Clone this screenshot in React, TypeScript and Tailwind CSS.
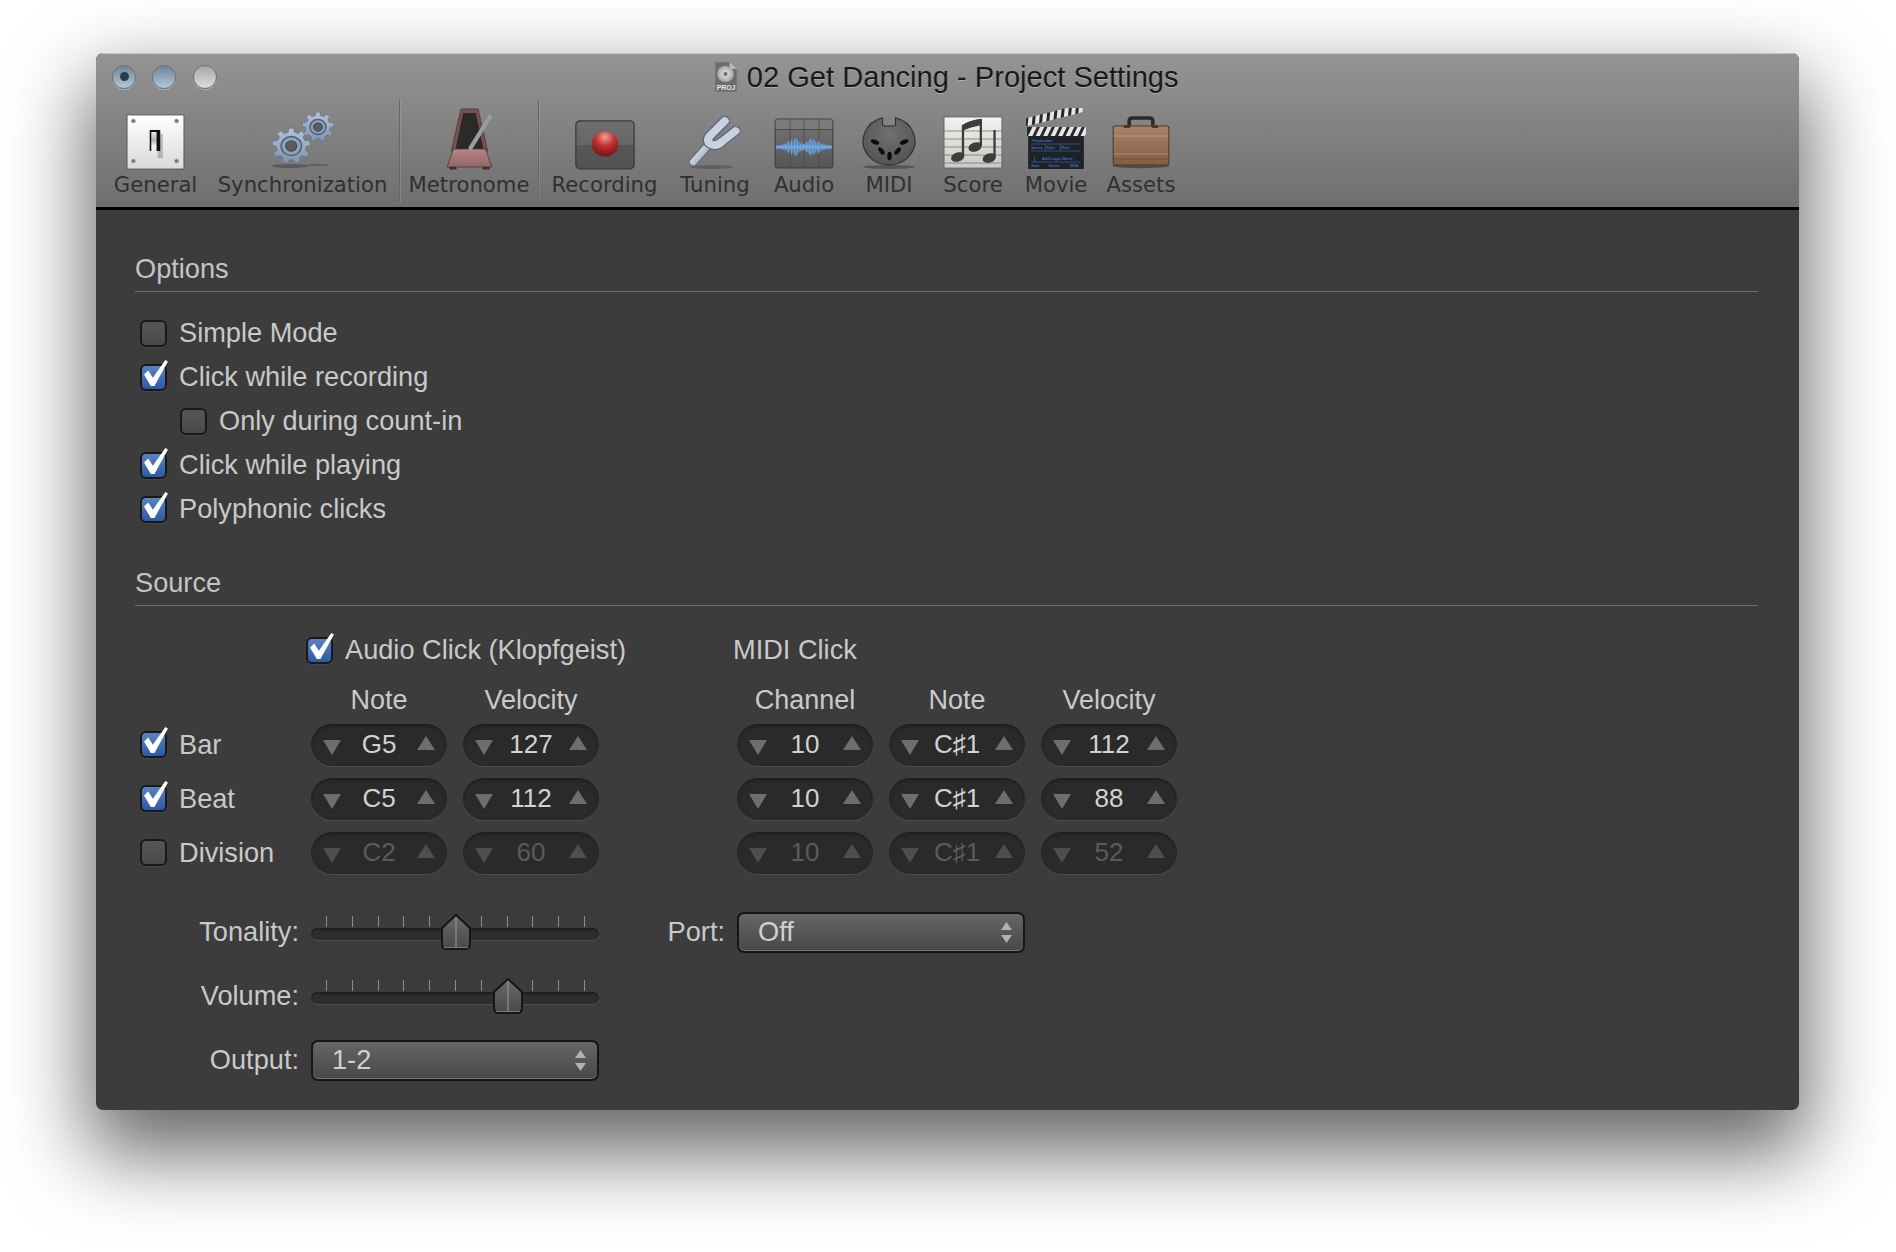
import React from "react";

const sans = "[font-family:'Liberation_Sans',Arial,sans-serif]";

function gearPath(cx: number, cy: number, r: number, teeth: number, depth: number) {
  const pts: string[] = [];
  const step = (Math.PI * 2) / teeth;
  for (let i = 0; i < teeth; i++) {
    const a = i * step - Math.PI / 2;
    const add = (ang: number, rad: number) =>
      pts.push(`${(cx + Math.cos(ang) * rad).toFixed(2)},${(cy + Math.sin(ang) * rad).toFixed(2)}`);
    add(a - step * 0.3, r - depth);
    add(a - step * 0.18, r);
    add(a + step * 0.18, r);
    add(a + step * 0.3, r - depth);
  }
  return pts.join(" ");
}

function GeneralIcon() {
  return (
    <svg width="59" height="56" viewBox="0 0 56 56" preserveAspectRatio="none">
      <defs>
        <linearGradient id="gp" x1="0" y1="0" x2="0" y2="1">
          <stop offset="0" stopColor="#ffffff" />
          <stop offset="1" stopColor="#d9d9d9" />
        </linearGradient>
        <linearGradient id="gs" x1="0" y1="0" x2="0" y2="1">
          <stop offset="0" stopColor="#ececec" />
          <stop offset="0.35" stopColor="#b0b0b0" />
          <stop offset="0.6" stopColor="#f2f2f2" />
          <stop offset="1" stopColor="#e2e2e2" />
        </linearGradient>
      </defs>
      <rect x="1" y="1" width="54" height="54" fill="url(#gp)" stroke="#4f4f4f" strokeWidth="0.8" />
      {[[7, 7], [48, 7], [7, 47], [48, 47]].map(([x, y], i) => (
        <circle key={i} cx={x} cy={y} r="2" fill="#777" stroke="#aaa" strokeWidth="0.6" />
      ))}
      <rect x="30" y="20" width="5" height="24" fill="#000" opacity="0.2" />
      <rect x="22.5" y="16" width="10" height="21" fill="#0f0f0f" />
      <rect x="24" y="18" width="5" height="23" fill="url(#gs)" />
    </svg>
  );
}

function GearsIcon() {
  const gear = (cx: number, cy: number, r: number, t: number, inner: number) => (
    <>
      <polygon points={gearPath(cx, cy, r, t, r * 0.22)} fill="url(#gg)" stroke="#5f6f86" strokeWidth="0.6" />
      <circle cx={cx} cy={cy} r={inner} fill="#8fa3be" stroke="#4e5d73" strokeWidth="1.4" />
      <circle cx={cx} cy={cy} r={inner * 0.55} fill="#5d5d5d" stroke="#3e4654" strokeWidth="1" />
    </>
  );
  return (
    <svg width="64" height="58" viewBox="0 0 60 58" preserveAspectRatio="none">
      <defs>
        <linearGradient id="gg" x1="0" y1="0" x2="0" y2="1">
          <stop offset="0" stopColor="#b4c3d8" />
          <stop offset="1" stopColor="#7f92ad" />
        </linearGradient>
      </defs>
      <ellipse cx="18" cy="54" rx="17" ry="2" fill="#000" opacity="0.25" />
      <ellipse cx="44" cy="53" rx="11" ry="1.3" fill="#000" opacity="0.18" />
      {gear(19, 34, 18, 9, 9.5)}
      {gear(44, 15, 15, 9, 7.5)}
    </svg>
  );
}

function MetronomeIcon() {
  return (
    <svg width="47" height="62" viewBox="0 0 44 62" preserveAspectRatio="none">
      <defs>
        <linearGradient id="mb" x1="0" y1="0" x2="0" y2="1">
          <stop offset="0" stopColor="#b58686" />
          <stop offset="1" stopColor="#966464" />
        </linearGradient>
      </defs>
      <polygon points="14,1 30,1 39,43 5,43" fill="#7a4f50" stroke="#4a3a3a" strokeWidth="0.8" />
      <polygon points="16,5 28,5 35,41 9,41" fill="#2a2a2a" />
      <polygon points="7,41 37,41 43,59 1,59" fill="url(#mb)" stroke="#4b3a3a" strokeWidth="0.8" />
      <rect x="3" y="59" width="7" height="2.5" rx="1" fill="#3a2f2f" />
      <rect x="34" y="59" width="7" height="2.5" rx="1" fill="#3a2f2f" />
      <line x1="23" y1="40" x2="41" y2="9" stroke="#9a9ca2" strokeWidth="4" strokeLinecap="round" />
    </svg>
  );
}

function RecordIcon() {
  return (
    <svg width="60" height="50" viewBox="0 0 56 50" preserveAspectRatio="none">
      <defs>
        <linearGradient id="rb" x1="0" y1="0" x2="0" y2="1">
          <stop offset="0" stopColor="#6e6e6e" />
          <stop offset="0.5" stopColor="#666" />
          <stop offset="0.5" stopColor="#575757" />
          <stop offset="1" stopColor="#525252" />
        </linearGradient>
        <radialGradient id="rr" cx="0.5" cy="0.22" r="0.8">
          <stop offset="0" stopColor="#eda09a" />
          <stop offset="0.45" stopColor="#c2302c" />
          <stop offset="1" stopColor="#6f1412" />
        </radialGradient>
      </defs>
      <rect x="0.8" y="0.8" width="54.4" height="48" rx="4" fill="url(#rb)" stroke="#3a3a3a" strokeWidth="1.2" />
      <circle cx="28" cy="24" r="12.5" fill="url(#rr)" />
    </svg>
  );
}

function ForkIcon() {
  return (
    <svg width="54" height="54" viewBox="0 0 50 54" preserveAspectRatio="none">
      <defs>
        <linearGradient id="ff" x1="0" y1="0" x2="1" y2="1">
          <stop offset="0" stopColor="#f0f3f8" />
          <stop offset="1" stopColor="#8e9bb0" />
        </linearGradient>
      </defs>
      <ellipse cx="22" cy="51" rx="20" ry="2" fill="#000" opacity="0.2" />
      <path d="M5 46 L19 29" stroke="#5e6a7c" strokeWidth="8.5" strokeLinecap="round" fill="none" />
      <path d="M5 46 L19 29" stroke="url(#ff)" strokeWidth="6.5" strokeLinecap="round" fill="none" />
      <path d="M34 5 L21 19 Q16 25 21 28 Q26 31 31 26 L44 15" stroke="#5e6a7c" strokeWidth="10" strokeLinecap="round" strokeLinejoin="round" fill="none" />
      <path d="M34 5 L21 19 Q16 25 21 28 Q26 31 31 26 L44 15" stroke="#c8d2e0" strokeWidth="7.5" strokeLinecap="round" strokeLinejoin="round" fill="none" />
    </svg>
  );
}

function AudioIcon() {
  const amps = [2,2,3,3,4,6,5,8,10,7,12,9,13,15,11,8,6,7,5,6,9,8,12,14,10,13,9,7,11,8,5,6,4,3,3,2,2];
  return (
    <svg width="60" height="52" viewBox="0 0 56 52" preserveAspectRatio="none">
      <defs>
        <linearGradient id="ab" x1="0" y1="0" x2="0" y2="1">
          <stop offset="0" stopColor="#757575" />
          <stop offset="1" stopColor="#565656" />
        </linearGradient>
      </defs>
      <rect x="1" y="1" width="54" height="49" rx="3" fill="url(#ab)" stroke="#3d3d3d" strokeWidth="1" />
      <rect x="1.5" y="1.5" width="53" height="10" rx="2" fill="#8a8a8a" opacity="0.45" />
      <line x1="1" y1="11.5" x2="55" y2="11.5" stroke="#4a4a4a" />
      {[15, 28, 42].map((x) => (
        <line key={x} x1={x} y1="1" x2={x} y2="50" stroke="#4a4a4a" strokeWidth="0.7" />
      ))}
      {amps.map((a, i) => (
        <line key={i} x1={2.5 + i * 1.39} y1={29 - a * 0.6} x2={2.5 + i * 1.39} y2={29 + a * 0.6} stroke="#69a6e6" strokeWidth="1" />
      ))}
      <line x1="2" y1="29" x2="54" y2="29" stroke="#69a6e6" strokeWidth="3" />
    </svg>
  );
}

function MidiIcon() {
  const pins = [[12, 26, 25], [18, 35, 55], [25.5, 40, 90], [33, 35, 125], [39, 26, 155]];
  return (
    <svg width="54" height="54" viewBox="0 0 50 54" preserveAspectRatio="none">
      <defs>
        <radialGradient id="mc" cx="0.5" cy="0.35" r="0.7">
          <stop offset="0" stopColor="#707070" />
          <stop offset="1" stopColor="#515151" />
        </radialGradient>
      </defs>
      <ellipse cx="25" cy="51" rx="24" ry="2" fill="#000" opacity="0.3" />
      <path d="M19 1.8 A24 24 0 1 0 31 1.8 L31 8 Q31 10 29 10 L21 10 Q19 10 19 8 Z" fill="url(#mc)" stroke="#2c2c2c" strokeWidth="1" />
      {pins.map(([x, y, r], i) => (
        <g key={i} transform={`rotate(${r} ${x} ${y})`}>
          <ellipse cx={x} cy={y} rx="4.2" ry="2.1" fill="#0c0c0c" />
        </g>
      ))}
    </svg>
  );
}

function ScoreIcon() {
  return (
    <svg width="61" height="54" viewBox="0 0 58 54" preserveAspectRatio="none">
      <defs>
        <linearGradient id="sp" x1="0" y1="0" x2="0" y2="1">
          <stop offset="0" stopColor="#f3f3ef" />
          <stop offset="1" stopColor="#c9c9c4" />
        </linearGradient>
      </defs>
      <rect x="1" y="1" width="55" height="51" fill="url(#sp)" stroke="#555" strokeWidth="0.7" />
      {[15, 23, 31, 39, 47].map((y) => (
        <line key={y} x1="1" y1={y} x2="56" y2={y} stroke="#777" strokeWidth="0.8" />
      ))}
      <ellipse cx="14" cy="41" rx="6.5" ry="4.6" transform="rotate(-20 14 41)" fill="#3c3c3c" />
      <ellipse cx="30.5" cy="31" rx="6.5" ry="4.6" transform="rotate(-20 30.5 31)" fill="#3c3c3c" />
      <ellipse cx="44" cy="42" rx="6.5" ry="4.6" transform="rotate(-20 44 42)" fill="#3c3c3c" />
      <path d="M19 40 L19 10 Q26 5 36 4 L36 30" fill="none" stroke="#3c3c3c" strokeWidth="2.2" />
      <path d="M18 10 Q26 4 37 3 L37 9 Q26 11 18 15 Z" fill="#3c3c3c" />
      <line x1="49" y1="41" x2="49" y2="14" stroke="#3c3c3c" strokeWidth="2.2" />
    </svg>
  );
}

function MovieIcon() {
  const stripes = [0, 1, 2, 3, 4, 5, 6, 7];
  return (
    <svg width="60" height="62" viewBox="0 0 56 62" preserveAspectRatio="none">
      <rect x="2" y="26" width="52" height="35" rx="1" fill="#1e2126" />
      <g transform="rotate(-15 2 20)">
        <rect x="1" y="10" width="54" height="8" fill="#26282c" />
        {stripes.map((i) => (
          <polygon key={i} points={`${5 + i * 7},10 ${9 + i * 7},10 ${6 + i * 7},18 ${2 + i * 7},18`} fill="#e6e6e6" />
        ))}
      </g>
      <rect x="1" y="19" width="54" height="9" fill="#26282c" />
      {stripes.map((i) => (
        <polygon key={i} points={`${6 + i * 7},19 ${10 + i * 7},19 ${6 + i * 7},28 ${2 + i * 7},28`} fill="#e6e6e6" />
      ))}
      <g fill="#3d6fb0" className={sans} fontSize="3.6" fontWeight="700">
        <text x="6" y="34">Production</text>
        <text x="5" y="41">Scene</text>
        <text x="19" y="41">Take</text>
        <text x="33" y="41">Reel</text>
        <text x="15" y="52">Add Logic Movie</text>
        <text x="5" y="59">Date</text>
        <text x="21" y="59">Scene</text>
        <text x="41" y="59">2024</text>
      </g>
      <g stroke="#3d6fb0" strokeWidth="0.6">
        <line x1="5" y1="36" x2="51" y2="36" />
        <line x1="5" y1="43" x2="51" y2="43" />
        <line x1="5" y1="54" x2="51" y2="54" />
        <line x1="18" y1="36" x2="18" y2="43" />
        <line x1="32" y1="36" x2="32" y2="43" />
        <line x1="8" y1="48" x2="8" y2="54" />
      </g>
    </svg>
  );
}

function AssetsIcon() {
  return (
    <svg width="60" height="54" viewBox="0 0 56 54" preserveAspectRatio="none">
      <defs>
        <linearGradient id="bc" x1="0" y1="0" x2="0" y2="1">
          <stop offset="0" stopColor="#a9846b" />
          <stop offset="1" stopColor="#845c42" />
        </linearGradient>
      </defs>
      <ellipse cx="28" cy="50" rx="27" ry="2.2" fill="#000" opacity="0.35" />
      <path d="M17 11 L17 5 Q17 2 20 2 L36 2 Q39 2 39 5 L39 11" fill="none" stroke="#2a2a2a" strokeWidth="3.4" />
      <rect x="2" y="10" width="52" height="39" rx="2" fill="url(#bc)" stroke="#4e3a2c" strokeWidth="1" />
      <line x1="2.5" y1="20" x2="53.5" y2="20" stroke="#c8a590" strokeWidth="1" opacity="0.7" />
      <line x1="2.5" y1="38" x2="53.5" y2="38" stroke="#c8a590" strokeWidth="1" opacity="0.6" />
      <line x1="2.5" y1="43" x2="53.5" y2="43" stroke="#6f4c35" strokeWidth="1" opacity="0.6" />
      <rect x="12" y="9" width="6" height="3" fill="#4a3a2e" />
      <rect x="38" y="9" width="6" height="3" fill="#4a3a2e" />
    </svg>
  );
}

function DocIcon() {
  return (
    <svg width="24" height="32" viewBox="0 0 23 32" preserveAspectRatio="none">
      <defs>
        <radialGradient id="dd" cx="0.5" cy="0.5" r="0.6">
          <stop offset="0" stopColor="#e6e6e6" />
          <stop offset="1" stopColor="#999" />
        </radialGradient>
      </defs>
      <path d="M1 1 L15 1 L22 8 L22 31 L1 31 Z" fill="#6d6d6d" stroke="#8a8a8a" strokeWidth="0.7" />
      <path d="M15 1 L15 8 L22 8 Z" fill="#b9b9b9" />
      <circle cx="11" cy="13" r="8" fill="url(#dd)" />
      <circle cx="11" cy="13" r="2" fill="#6d6d6d" />
      <text x="11.5" y="29" textAnchor="middle" fontSize="6.6" fontWeight="700" fill="#e8e8e8" className={sans}>
        PROJ
      </text>
    </svg>
  );
}

function Light({ kind }: { kind: "close" | "min" | "max" }) {
  const cls =
    kind === "max"
      ? "from-[#a6a6a6] to-[#dedede]"
      : "from-[#6c8599] to-[#b5c8d6]";
  return (
    <div className={`flex h-[24px] w-[24px] items-center justify-center rounded-full border border-[#707070] bg-linear-to-b shadow-[0_1px_0_rgba(255,255,255,0.3)] ${cls}`}>
      {kind === "close" && <div className="h-[9px] w-[9px] rounded-full bg-[#2f3b47]" />}
    </div>
  );
}

const tools: { label: string; w: string; icon: React.ReactNode }[] = [
  { label: "General", w: "w-[101px]", icon: <GeneralIcon /> },
  { label: "Synchronization", w: "w-[193px]", icon: <GearsIcon /> },
  { label: "|", w: "", icon: null },
  { label: "Metronome", w: "w-[138px]", icon: <MetronomeIcon /> },
  { label: "|", w: "", icon: null },
  { label: "Recording", w: "w-[131px]", icon: <RecordIcon /> },
  { label: "Tuning", w: "w-[90px]", icon: <ForkIcon /> },
  { label: "Audio", w: "w-[88px]", icon: <AudioIcon /> },
  { label: "MIDI", w: "w-[82px]", icon: <MidiIcon /> },
  { label: "Score", w: "w-[86px]", icon: <ScoreIcon /> },
  { label: "Movie", w: "w-[80px]", icon: <MovieIcon /> },
  { label: "Assets", w: "w-[90px]", icon: <AssetsIcon /> },
];

function Toolbar() {
  return (
    <div className="flex h-[107px] items-stretch pl-[9px]">
      {tools.map((t, i) =>
        t.label === "|" ? (
          <div key={i} className="h-[102px] w-px bg-[#666] shadow-[1px_0_0_rgba(255,255,255,0.12)]" />
        ) : (
          <div key={t.label} className={`flex flex-col items-center justify-end ${t.w}`}>
            <div className="flex items-end justify-center">{t.icon}</div>
            <div className="mb-[8px] mt-px h-[28px] whitespace-nowrap text-[21.2px] leading-[28px] text-[#303030] [font-family:'DejaVu_Sans',sans-serif]">
              {t.label}
            </div>
          </div>
        )
      )}
    </div>
  );
}

function Checkbox({ checked }: { checked?: boolean }) {
  return (
    <div
      className={`relative h-[27px] w-[27px] shrink-0 rounded-[6px] border-2 border-[#191919] bg-linear-to-b shadow-[0_1px_0_rgba(255,255,255,0.06)] ${
        checked ? "from-[#5a83bf] to-[#2c5aa2]" : "from-[#565656] to-[#4a4a4a]"
      }`}
    >
      {checked && (
        <svg width="24" height="27" viewBox="0 0 23 26" className="absolute -top-[6px] left-[2px]">
          <polygon points="0,14 4,10 8.5,17 20.5,0 23,1.5 10,25 6.5,25" fill="#ffffff" />
        </svg>
      )}
    </div>
  );
}

function CheckRow({ label, checked, indent }: { label: string; checked?: boolean; indent?: boolean }) {
  return (
    <div className={`flex h-[44px] items-center gap-[12px] ${indent ? "pl-[45px]" : "pl-[5px]"}`}>
      <Checkbox checked={checked} />
      <span className="text-[27.2px] text-[#c9c9c9]">{label}</span>
    </div>
  );
}

function Stepper({ value, off }: { value: string; off?: boolean }) {
  const tri = off ? "#4e4e4e" : "#6e6e6e";
  return (
    <div className="flex h-[42px] w-[136px] shrink-0 items-center justify-between rounded-full bg-[#2a2a2a] px-[12px] shadow-[inset_0_2px_3px_rgba(0,0,0,0.3),0_1px_0_rgba(255,255,255,0.09)]">
      <svg width="18" height="15" viewBox="0 0 18 15" className="mt-[4px]">
        <polygon points="0,0 18,0 9,15" fill={tri} />
      </svg>
      <span className={`-mt-[1px] text-[26px] ${off ? "text-[#5b5b5b]" : "text-[#d2d2d2]"}`}>{value}</span>
      <svg width="18" height="14" viewBox="0 0 18 14" className="-mt-[4px]">
        <polygon points="9,0 18,14 0,14" fill={tri} />
      </svg>
    </div>
  );
}

function Slider({ pos }: { pos: number }) {
  return (
    <div className="relative h-[42px] w-[288px]">
      <div className="flex h-[11px] justify-between pl-[15px] pr-[14px]">
        {Array.from({ length: 11 }).map((_, i) => (
          <div key={i} className="h-[11px] w-px bg-[#8f8f8f]" />
        ))}
      </div>
      <div className="mt-[1px] h-[12px] rounded-full bg-[#2d2d2d] shadow-[inset_0_2px_2px_rgba(0,0,0,0.35),0_1px_0_rgba(255,255,255,0.1)]" />
      <svg width="32" height="38" viewBox="0 0 32 38" className="absolute -top-[3px]" style={{ left: pos }}>
        <defs>
          <linearGradient id="th" x1="0" y1="0" x2="0" y2="1">
            <stop offset="0" stopColor="#6b6b6b" />
            <stop offset="1" stopColor="#484848" />
          </linearGradient>
        </defs>
        <path d="M16 2 L30 15 L30 31 Q30 36 25 36 L7 36 Q2 36 2 31 L2 15 Z" fill="url(#th)" stroke="#151515" strokeWidth="2" strokeLinejoin="round" />
        <line x1="16" y1="4" x2="16" y2="34" stroke="#9a9a9a" strokeWidth="1" />
        <path d="M4 34.5 L28 34.5" stroke="#7a7a7a" strokeWidth="1" />
      </svg>
    </div>
  );
}

function Select({ value, w }: { value: string; w: string }) {
  return (
    <div
      className={`flex h-[41px] items-center justify-between rounded-[7px] border-2 border-[#161616] bg-linear-to-b from-[#666666] to-[#484848] pl-[19px] pr-[11px] shadow-[inset_0_-1px_0_rgba(255,255,255,0.25)] ${w}`}
    >
      <span className="text-[27.2px] text-[#d0d0d0]">{value}</span>
      <svg width="11" height="21" viewBox="0 0 11 21">
        <polygon points="5.5,0 11,8 0,8" fill="#b2b2b2" />
        <polygon points="0,13 11,13 5.5,21" fill="#b2b2b2" />
      </svg>
    </div>
  );
}

function Heading({ label }: { label: string }) {
  return (
    <div className="flex h-[38px] items-start border-b border-[#6e6e6e] text-[27.2px] leading-[30px] text-[#c4c4c4]">
      {label}
    </div>
  );
}

function ColHead({ label }: { label: string }) {
  return <div className="h-[30px] w-[136px] shrink-0 text-center text-[27px] leading-[30px] text-[#cacaca]">{label}</div>;
}

export default function App() {
  return (
    <div className={`h-[1252px] w-[1896px] overflow-hidden bg-white pl-[96px] pt-[53px] ${sans}`}>
      <div className="h-[1057px] w-[1703px] overflow-hidden rounded-[7px] bg-[#3c3c3c] shadow-[0_36px_80px_8px_rgba(0,0,0,0.6)]">
        <div className="border-b-[3px] border-black bg-linear-to-b from-[#959595] to-[#6f6f6f] shadow-[inset_0_1px_0_#c4c4c4]">
          <div className="flex h-[47px] items-center pl-[16px]">
            <div className="flex gap-[16.4px]">
              <Light kind="close" />
              <Light kind="min" />
              <Light kind="max" />
            </div>
            <div className="ml-[497px] flex items-center gap-[9px]">
              <DocIcon />
              <span className="whitespace-nowrap text-[29.1px] leading-[32px] text-[#191919] [text-shadow:0_1px_0_rgba(255,255,255,0.3)]">
                02 Get Dancing - Project Settings
              </span>
            </div>
          </div>
          <Toolbar />
        </div>

        <div className="pl-[39px] pr-[41px] pt-[44px]">
          <Heading label="Options" />
          <div className="mt-[19px]">
            <CheckRow label="Simple Mode" />
            <CheckRow label="Click while recording" checked />
            <CheckRow label="Only during count-in" indent />
            <CheckRow label="Click while playing" checked />
            <CheckRow label="Polyphonic clicks" checked />
          </div>

          <div className="mt-[37px]">
            <Heading label="Source" />
          </div>

          <div className="mt-[22px] flex">
            <div className="w-[525px] shrink-0">
              <div className="flex h-[44px] items-center gap-[12px] pl-[171px] pt-[1px]">
                <Checkbox checked />
                <span className="whitespace-nowrap text-[27.2px] text-[#c9c9c9]">Audio Click (Klopfgeist)</span>
              </div>
              <div className="mt-[13px] flex gap-[16px] pl-[176px]">
                <ColHead label="Note" />
                <ColHead label="Velocity" />
              </div>
              <div className="mt-[9px] flex flex-col gap-[12px]">
                {[
                  { l: "Bar", c: true, a: "G5", b: "127" },
                  { l: "Beat", c: true, a: "C5", b: "112" },
                  { l: "Division", c: false, a: "C2", b: "60" },
                ].map((r) => (
                  <div key={r.l} className="flex h-[42px] items-center">
                    <div className="flex w-[176px] items-center gap-[12px] pl-[5px]">
                      <Checkbox checked={r.c} />
                      <span className="text-[27.2px] text-[#c9c9c9]">{r.l}</span>
                    </div>
                    <div className="flex gap-[16px]">
                      <Stepper value={r.a} off={!r.c} />
                      <Stepper value={r.b} off={!r.c} />
                    </div>
                  </div>
                ))}
              </div>
              <div className="mt-[42px] flex flex-col gap-[22px]">
                <div className="flex h-[42px] items-start gap-[12px]">
                  <span className="w-[164px] text-right text-[27.2px] leading-[32px] text-[#c9c9c9]">Tonality:</span>
                  <Slider pos={129} />
                </div>
                <div className="flex h-[37px] items-start gap-[12px]">
                  <span className="w-[164px] text-right text-[27.2px] leading-[32px] text-[#c9c9c9]">Volume:</span>
                  <Slider pos={181} />
                </div>
                <div className="flex h-[42px] items-center gap-[12px]">
                  <span className="w-[164px] text-right text-[27.2px] text-[#c9c9c9]">Output:</span>
                  <Select value="1-2" w="w-[288px]" />
                </div>
              </div>
            </div>

            <div>
              <div className="flex h-[44px] items-center pl-[73px] pt-[1px]">
                <span className="text-[27.2px] text-[#c9c9c9]">MIDI Click</span>
              </div>
              <div className="mt-[13px] flex gap-[16px] pl-[77px]">
                <ColHead label="Channel" />
                <ColHead label="Note" />
                <ColHead label="Velocity" />
              </div>
              <div className="mt-[9px] flex flex-col gap-[12px] pl-[77px]">
                {[
                  ["10", "C♯1", "112", false],
                  ["10", "C♯1", "88", false],
                  ["10", "C♯1", "52", true],
                ].map((r, i) => (
                  <div key={i} className="flex gap-[16px]">
                    <Stepper value={r[0] as string} off={r[3] as boolean} />
                    <Stepper value={r[1] as string} off={r[3] as boolean} />
                    <Stepper value={r[2] as string} off={r[3] as boolean} />
                  </div>
                ))}
              </div>
              <div className="mt-[37px] flex h-[42px] items-center">
                <span className="w-[65px] text-right text-[27.2px] text-[#c9c9c9]">Port:</span>
                <div className="ml-[12px]">
                  <Select value="Off" w="w-[288px]" />
                </div>
              </div>
            </div>
          </div>
        </div>
      </div>
    </div>
  );
}
